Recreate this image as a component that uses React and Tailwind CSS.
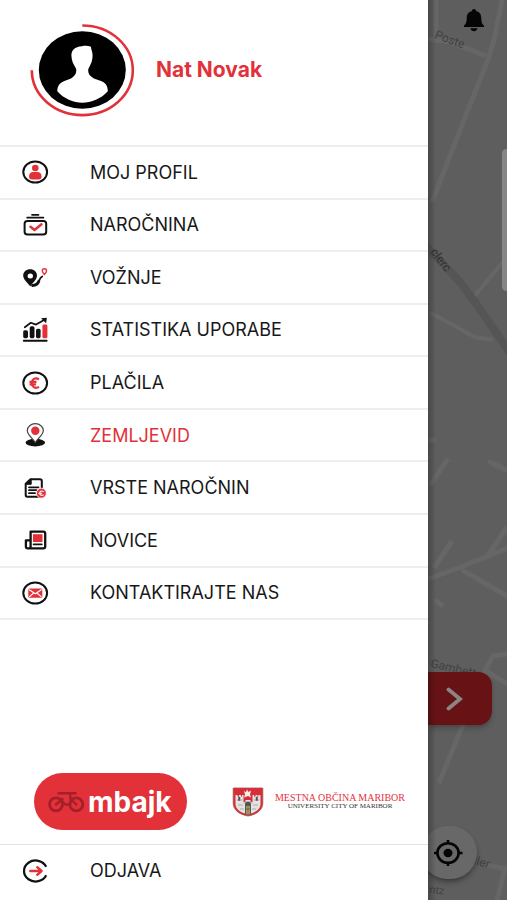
import React from "react";

const RED = "#e3313a";
const INK = "#111111";

function Icon({ children }) {
  return (
    <svg
      viewBox="0 0 28 26"
      className="h-[26px] w-7 shrink-0"
      fill="none"
      stroke={INK}
      strokeWidth="2"
      strokeLinecap="round"
      strokeLinejoin="round"
      aria-hidden="true"
    >
      {children}
    </svg>
  );
}

const Ring = () => <ellipse cx="14.2" cy="13" rx="11.9" ry="10.6" />;

const ProfileIcon = () => (
  <Icon>
    <Ring />
    <circle cx="14.3" cy="9" r="3.3" fill={RED} stroke="none" />
    <path d="M8 17.500c0-3 2-4.400 4-4.400h4.600c2 0 4 1.400 4 4.400 0 2-1 2.900-3 2.900h-6.600c-2 0-3-.9-3-2.900z" fill={RED} stroke="none" />
  </Icon>
);

const SubscriptionIcon = () => (
  <Icon>
    <path d="M11 2.800h6.500M6.200 5.700h16.200" strokeWidth="1.700" />
    <rect x="3.600" y="9" width="21.600" height="13.500" rx="2.800" />
    <path d="M9.500 14.800l4 3.200 7-5.800" stroke={RED} strokeWidth="2.500" />
  </Icon>
);

const RidesIcon = () => (
  <Icon>
    <path
      d="M9.200 5.300c-3.900 0-7 2.600-7 6.300 0 4 4.200 7.200 7 10.700 2.800-3.500 6.800-6.700 6.800-10.700 0-3.700-3-6.300-6.800-6.300zM9.300 9.500a2.700 2.500 0 1 1 0 5 2.700 2.500 0 0 1 0-5z"
      fill={INK}
      fillRule="evenodd"
      stroke="none"
    />
    <path d="M11.500 21.500c4-.3 5.500-1.800 6.300-4.300" strokeWidth="2.800" />
    <path d="M18.200 16.500c.7-2 1.500-3.200 3-4" strokeWidth="1.800" />
    <path d="M23.400 10.500c-1.400-1.600-2.100-2.500-2.100-3.600a2.100 2.100 0 0 1 4.200 0c0 1.100-.7 2-2.100 3.600z" stroke={RED} strokeWidth="1.400" />
  </Icon>
);

const StatsIcon = () => (
  <Icon>
    <g fill={INK} stroke="none">
      <rect x="2.200" y="13.200" width="4.800" height="8" rx="1.600" />
      <rect x="8.700" y="9.300" width="4.800" height="11.900" rx="1.600" />
      <rect x="15" y="11.700" width="4.600" height="9.500" rx="1.600" />
      <rect x="21.400" y="7.600" width="5" height="13.600" rx="1.400" fill={RED} />
      <path d="M20 1.300l5.800-.5-.6 5.400z" />
    </g>
    <path d="M3.800 10.300l6-4.500 5.300 1.800 8.400-4.900" strokeWidth="1.700" />
    <path d="M2.800 23.700h22.800" strokeWidth="2" />
  </Icon>
);

const PaymentIcon = () => (
  <Icon>
    <Ring />
    <path d="M18 9.200c-4-2.300-7.200.3-7.200 3.800s3.200 6.200 7.200 3.900M8.500 11.800h7M8.500 14.300h6.500" stroke={RED} strokeWidth="2.200" strokeLinecap="butt" />
  </Icon>
);

const MapIcon = () => (
  <Icon>
    <ellipse cx="14.300" cy="20.600" rx="9.800" ry="3.800" fill={INK} stroke="none" />
    <path d="M14.300 20.500c-2.700-4.300-8-7.500-8-12a8 6.800 0 0 1 16 0c0 4.500-5.300 7.700-8 12z" fill="#fff" stroke="#444" strokeWidth="1.200" />
    <circle cx="14.300" cy="8.800" r="4.200" fill={RED} stroke="none" />
  </Icon>
);

const PlansIcon = () => (
  <Icon>
    <path d="M9.500 4.300h9.500a1.800 1.800 0 0 1 1.800 1.800v14a1.600 1.600 0 0 1-1.600 1.600H6.300a1.600 1.600 0 0 1-1.600-1.600V8.700z" />
    <path d="M4.700 9.300h5.500V4.300z" fill={INK} strokeWidth="1" />
    <path d="M8 12.300h9.500M8 15.200h7.500M8 18.200h6" strokeWidth="1.800" />
    <circle cx="20.400" cy="18.200" r="5" fill={RED} stroke="#fff" strokeWidth=".8" />
    <path d="M22.300 16.400c-2-1-3.600.2-3.600 1.800s1.600 2.800 3.600 1.800M17.700 18.200h3" stroke="#fff" strokeWidth="1.100" />
  </Icon>
);

const NewsIcon = () => (
  <Icon>
    <path d="M9.600 4.600h12.800a1.800 1.800 0 0 1 1.800 1.800v13.200a1.800 1.800 0 0 1-1.800 1.800H6.700a1.800 1.800 0 0 1-1.800-1.800v-6.300h4.700M9.600 4.600v15c0 1-.8 1.800-1.800 1.800" strokeWidth="2.300" />
    <rect x="12" y="7.200" width="9.500" height="7.800" fill={RED} stroke="none" />
    <path d="M12.700 17.400h8" strokeWidth="1.900" />
  </Icon>
);

const ContactIcon = () => (
  <Icon>
    <Ring />
    <rect x="7.300" y="8.500" width="14" height="9.200" rx="1.200" fill={RED} stroke="none" />
    <path d="M8.300 9.800l6 4 6-4M8.500 16.600l3.600-3.100M20.100 16.600l-3.600-3.100" stroke="#fff" strokeWidth="1.200" />
  </Icon>
);

const LogoutIcon = () => (
  <Icon>
    <path d="M25.200 8.700A11.600 10.500 0 1 0 25.200 17.300" strokeWidth="2.200" strokeLinecap="butt" />
    <path d="M9.300 13h10.500M16.200 9.200l4.400 3.800-4.400 3.800" stroke={RED} strokeWidth="2.400" />
  </Icon>
);

const items = [
  { label: "MOJ PROFIL", Glyph: ProfileIcon },
  { label: "NAROČNINA", Glyph: SubscriptionIcon },
  { label: "VOŽNJE", Glyph: RidesIcon },
  { label: "STATISTIKA UPORABE", Glyph: StatsIcon },
  { label: "PLAČILA", Glyph: PaymentIcon },
  { label: "ZEMLJEVID", Glyph: MapIcon, active: true },
  { label: "VRSTE NAROČNIN", Glyph: PlansIcon },
  { label: "NOVICE", Glyph: NewsIcon },
  { label: "KONTAKTIRAJTE NAS", Glyph: ContactIcon },
];

function Avatar() {
  return (
    <svg viewBox="0 0 106 94" className="h-[94px] w-[106px] shrink-0" role="img" aria-label="Nat Novak">
      <path d="M53.300 2.500A50.500 44.800 0 1 1 2.800 47.300" fill="none" stroke={RED} strokeWidth="2.600" />
      <ellipse cx="53.300" cy="47" rx="43.500" ry="38.800" fill="#000" />
      <path
        d="M53 23.300c3-.8 6-.6 9 .5-.4 1.700 1.700 4.600 1.600 8.800 0 5-1.600 8.500-3.800 12.500-1 1.500-.6 4 .2 5.900 1.800 3.600 6.600 5.300 11.500 6.800 4.500 1.500 7.300 4.600 7.300 10.400C72.500 75.500 62 79.700 53.300 79.700S34.500 75.500 28.300 68.200c0-5.800 3.200-8.900 7.700-10.400 4.900-1.500 8.700-3.200 10.500-6.800.8-1.900 1.200-4.400.2-5.900-2.400-4-4.200-7.500-4.300-12.500 0-5 3-8.900 10.600-9.300z"
        fill="#fff"
      />
    </svg>
  );
}

function Bike() {
  return (
    <svg viewBox="0 0 36 22" className="h-[22px] w-9 shrink-0" fill="none" stroke="#a51f28" strokeWidth="2.800" strokeLinecap="round" aria-hidden="true">
      <ellipse cx="8" cy="13.300" rx="6.500" ry="6.500" />
      <ellipse cx="28.300" cy="13.300" rx="6.500" ry="6.500" />
      <path d="M8 13.500l6.500-5.500M28.300 13.500l-6-6V2M14 9.500c2 4.500 5.500 5.500 8.500 2.500M10.500 2.300h17" strokeWidth="2.400" />
    </svg>
  );
}

function Crest() {
  return (
    <svg viewBox="0 0 32 30" className="h-[30px] w-8 shrink-0" aria-hidden="true">
      <path d="M1.200 1h29.600v15c0 6.500-5.500 11.500-14.800 13C6.700 27.500 1.200 22.500 1.200 16z" fill="#d92d37" stroke="#a84d52" strokeWidth=".8" />
      <path d="M3.500 8h2v1.500h1.500V8h2v1.500H10V8h1.500v7h2v-2h5v2h2V8H22v1.500h1.500V8h2v1.500h1V8h2v9c0 5-5 8.700-12.500 10.200C8.500 25.700 3.500 22 3.500 17z" fill="#e6e4e2" />
      <path d="M12 4l2 1.300 1-2.800 1.500 2.500 2.500-1.500-1 4 1 3-3-1.500-4 1.500 1-3z" fill="#f2eeee" />
      <path d="M4.500 13h6M21.500 13h6M11.500 16h9M6 18h5M21 18h5M8 22h4M20 22h4" stroke="#9b9b9b" strokeWidth=".8" />
      <path d="M6.200 9.800h2v4h-2zM23.800 9.800h2v4h-2zM13 17.500a3 3 0 0 1 6 0V27l-3 .8-3-.8z" fill="#555" />
      <path d="M14.200 19h3.600v8l-1.800.5-1.800-.5z" fill="#bcae63" />
      <path d="M14.200 22h3.600M16 19v8" stroke="#4b4b43" strokeWidth=".7" />
    </svg>
  );
}

function MapStrip() {
  return (
    <section aria-label="Zemljevid" className="relative w-[79px] shrink-0 overflow-hidden bg-[#5e5e5e]">
      <svg viewBox="0 0 79 900" preserveAspectRatio="xMinYMin slice" className="absolute inset-0 h-full w-full" aria-hidden="true">
        <g fill="none" stroke="#666666" strokeWidth="5">
          <path d="M8 0v38M0 39l22 3 36 14M74 0l-8 40-6 20-22 55L4 202" />
          <path d="M79 257l-35 42M3 313l44 24 18 3" strokeWidth="4" />
          <path d="M0 440h8M20 459L2 485M60 461l20 10M24 541L6 568M0 579l28-10 52-21M59 557l20-30M34 570l45 26" />
          <path d="M7 600l8 6M79 654l-14 2-8 14 22 14M57 671L11 783M58 865l21 4M77 868l-8 32" />
        </g>
        <path d="M-4 244l36 38 15 20 38 55" fill="none" stroke="#555555" strokeWidth="8" />
        <g className="font-[Roboto,'Liberation_Sans',sans-serif]" fontSize="12" fill="#353535">
          <text x="6" y="38" transform="rotate(20 6 38)" fill="#424242">Poste</text>
          <text x="2" y="252" transform="rotate(53 2 252)" fill="#303030">clerc</text>
          <text x="2" y="667" transform="rotate(13 2 667)" fill="#424242">Gambetta</text>
          <text x="45" y="864" transform="rotate(16 45 864)" fill="#424242">iler</text>
          <text x="1" y="893" fontSize="11" transform="rotate(6 1 893)" fill="#424242">ntz</text>
        </g>
      </svg>
      <button aria-label="Obvestila" className="absolute right-[22px] top-2">
        <svg viewBox="0 0 22 24" className="block h-6 w-[22px]" fill="#050505">
          <path d="M11 1c1.300 0 2 .8 2 2 3.700.9 5.300 3.700 5.300 7.200 0 4 .7 5.500 2.700 7.300v1.600H1v-1.600c2-1.800 2.700-3.300 2.700-7.300C3.700 6.700 5.300 3.900 9 3c0-1.200.7-2 2-2zM7.500 20.300h7c-.4 2-1.700 3-3.500 3s-3.100-1-3.500-3z" />
        </svg>
      </button>
      <div className="absolute -right-1 top-[149px] h-[142px] w-[9px] rounded-md bg-[#868686]" />
      <button aria-label="Odpri" className="absolute left-0 top-[672px] flex h-[53px] w-16 items-center rounded-r-[14px] bg-[#671316] pl-[18px] shadow-md shadow-black/20">
        <svg viewBox="0 0 17 24" className="h-6 w-[17px]" fill="none" stroke="#8b8585" strokeWidth="3.800" strokeLinecap="round">
          <path d="M2.500 2.500L14 12 2.500 21.500" />
        </svg>
      </button>
      <button aria-label="Moja lokacija" className="absolute -left-[7px] top-[826px] flex h-[53px] w-14 items-center justify-center rounded-full bg-[#686868] shadow-md shadow-black/30">
        <svg viewBox="0 0 30 28" className="h-7 w-[30px]" fill="none" stroke="#050505" strokeWidth="2.600">
          <ellipse cx="14" cy="14" rx="10.600" ry="9.800" />
          <ellipse cx="14" cy="14" rx="4.500" ry="4.200" fill="#050505" stroke="none" />
          <path d="M14 1v4M14 23v4M0 14h4M24 14h4.500" />
        </svg>
      </button>
      <div className="absolute inset-y-0 left-0 w-2 bg-gradient-to-r from-black/25 to-transparent" />
    </section>
  );
}

export default function App() {
  return (
    <div className="flex min-h-screen bg-white font-['Inter','Liberation_Sans',sans-serif] text-[#181818]">
      <aside className="flex min-w-0 flex-1 flex-col bg-white">
        <header className="flex h-[145px] items-center gap-[21px] pb-[6px] pl-[29px]">
          <Avatar />
          <h1 className="text-[21px] font-bold text-[#e3313a]">Nat Novak</h1>
        </header>
        <nav className="h-[475px] border-b-2 border-[#eeeeee]">
          <ul className="flex h-full flex-col">
            {items.map(({ label, Glyph, active }) => (
              <li key={label} className="flex-1 border-t-2 border-[#eeeeee]">
                <a href="#" className={`flex h-full items-center gap-[41px] pl-[21px] text-[18px] ${active ? "text-[#e3313a]" : ""}`}>
                  <Glyph />
                  {label}
                </a>
              </li>
            ))}
          </ul>
        </nav>
        <div className="mt-auto flex items-center justify-between pb-[14px] pl-[34px] pr-[23px]">
          <div className="flex h-[57px] w-[153px] items-center gap-1 rounded-full bg-[#e3313a] pl-[14px] text-[28px] font-bold leading-8 text-white">
            <Bike />
            <span>mbajk</span>
          </div>
          <div className="flex items-center gap-[11px] font-['Liberation_Serif',serif]">
            <Crest />
            <div className="text-center leading-[8px]">
              <p className="text-[10px] text-[#e3313a]">MESTNA OBČINA MARIBOR</p>
              <p className="text-[7px] text-[#333333]">UNIVERSITY CITY OF MARIBOR</p>
            </div>
          </div>
        </div>
        <footer className="h-14 border-t border-[#e2e2e2]">
          <button className="flex w-full items-center gap-[41px] pl-[21px] pt-3 text-[18px]">
            <LogoutIcon />
            ODJAVA
          </button>
        </footer>
      </aside>
      <MapStrip />
    </div>
  );
}
